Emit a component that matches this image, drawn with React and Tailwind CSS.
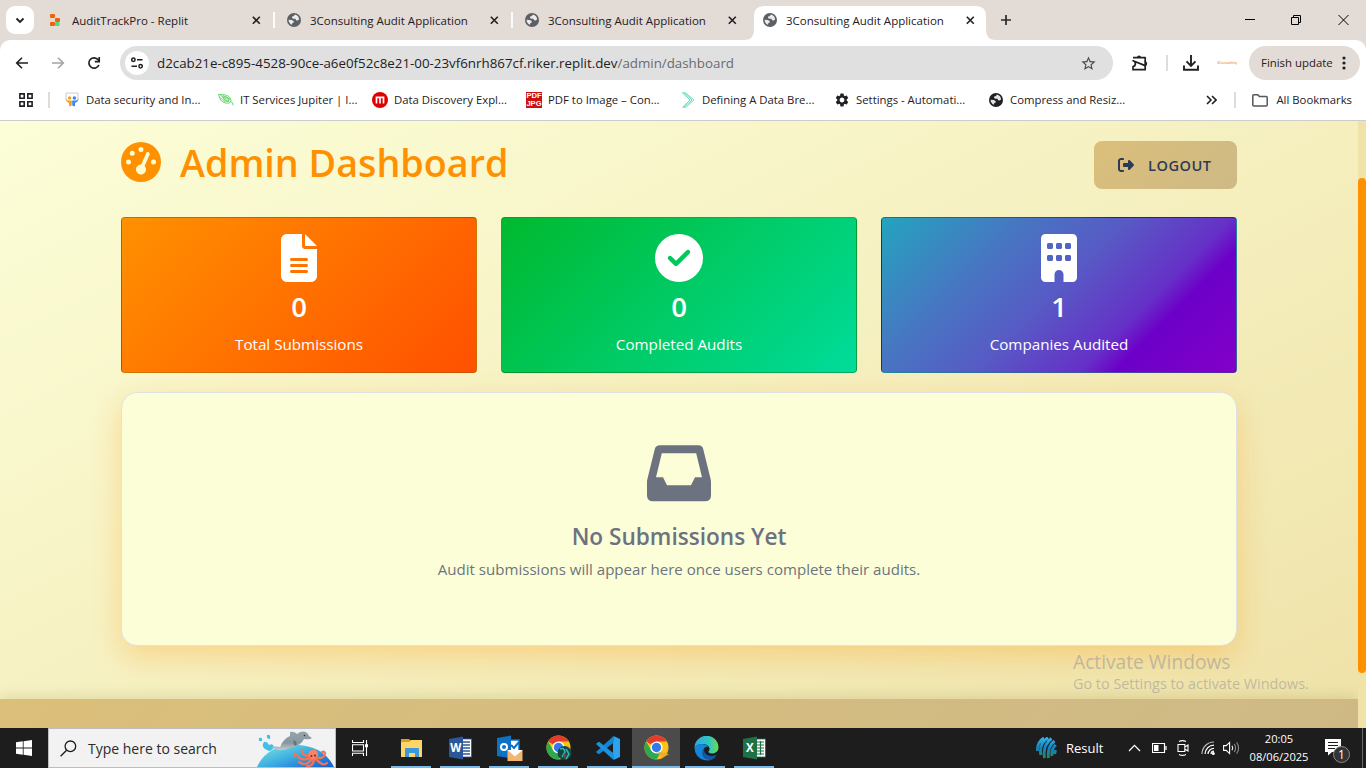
import React from "react";
import { FaGaugeHigh, FaFileLines, FaCircleCheck, FaBuilding, FaRightFromBracket } from "react-icons/fa6";
import { MdSettings, MdStarOutline } from "react-icons/md";

const Globe = ({ size = 14, className = "" }) => (
  <svg width={size} height={size} viewBox="0 0 14 14" className={className}>
    <circle cx="7" cy="7" r="7" fill="currentColor" />
    <path d="M7.8 1.5 L7 3 L5.2 3.4 L5 5 L6.5 5.7 L8.6 5.8 L9 7.2 L10.3 7.5 L12 6.8 A5.3 5.3 0 0 0 7.8 1.5Z" fill="#fff" opacity=".88" />
    <path d="M1.6 6.8 L4.8 7 L6.6 8 L6.8 9.6 L5.3 10 L5 11.8 A5.4 5.4 0 0 1 1.6 6.8Z" fill="#fff" opacity=".88" />
  </svg>
);

const Close = () => (
  <svg width="9" height="9" viewBox="0 0 9 9" className="block">
    <path d="M.8 .8L7.8 7.8M7.8 .8L.8 7.8" stroke="#1f2023" strokeWidth="1.6" />
  </svg>
);

const Replit = () => (
  <svg width="12" height="14" viewBox="0 0 12 14">
    <rect x="1" y="1" width="5" height="4" rx="1" fill="#f26207" />
    <rect x="6" y="5" width="5" height="4" rx="1" fill="#f26207" />
    <rect x="1" y="9" width="5" height="4" rx="1" fill="#f26207" />
    <rect x="6" y="9" width="4.5" height="4" rx="1" fill="#4ade80" />
  </svg>
);

function Tab({ title, icon, active, divider }) {
  return (
    <div className="relative flex h-[34px] w-[238px] shrink-0 items-start pl-[19px]">
      {active && (
        <svg width="252" height="34" viewBox="0 0 252 34" className="absolute left-0 top-0">
          <path d="M0 34Q10 34 10 24V10Q10 0 20 0H232Q242 0 242 10V24Q242 34 252 34Z" fill="#fff" />
        </svg>
      )}
      <div className="relative flex h-7 flex-1 items-center">
        <span className="flex w-[23px] shrink-0 items-center text-[#5c5f64]">{icon}</span>
        <span className="mt-px w-[180px] whitespace-nowrap text-[11.5px] text-[#1f2023]">{title}</span>
        <Close />
      </div>
      {divider && <div className="absolute right-[-7px] top-[6px] h-4 w-[2px] bg-white/90" />}
    </div>
  );
}

function TabStrip() {
  return (
    <div className="flex h-10 items-start bg-[#e3dbd6] pt-[6px]">
      <div className="ml-[6px] flex size-7 shrink-0 items-center justify-center rounded-[9px] bg-white">
        <svg width="10" height="7" viewBox="0 0 10 7"><path d="M1.5 1.5L5 5L8.5 1.5" fill="none" stroke="#1f2023" strokeWidth="1.8" /></svg>
      </div>
      <div className="ml-[-4px] flex">
        <Tab title="AuditTrackPro - Replit" icon={<Replit />} divider />
        <Tab title="3Consulting Audit Application" icon={<Globe />} divider />
        <Tab title="3Consulting Audit Application" icon={<Globe />} />
        <Tab title="3Consulting Audit Application" icon={<Globe />} active />
      </div>
      <svg width="12" height="12" viewBox="0 0 12 12" className="ml-[18px] mt-2"><path d="M6 1V11M1 6H11" stroke="#2b2b2d" strokeWidth="1.7" /></svg>
      <div className="ml-auto flex items-center gap-9 pr-[17px] pt-2">
        <svg width="10" height="12" viewBox="0 0 10 12"><path d="M0 5.5H10" stroke="#000" /></svg>
        <svg width="11" height="12" viewBox="0 0 11 12"><path d="M.5 3.5H7.5V10.5H.5ZM2.5 3.5V1.5H9.5V8.5H7.5" fill="none" stroke="#000" /></svg>
        <svg width="11" height="12" viewBox="0 0 11 12"><path d="M.5 1L10.5 11M10.5 1L.5 11" stroke="#000" /></svg>
      </div>
    </div>
  );
}

function Toolbar() {
  return (
    <div className="bg-[#e3dbd6]">
      <div className="flex h-[46px] items-center rounded-t-[10px] bg-white">
        <svg width="14" height="14" viewBox="0 0 14 14" className="ml-[15px]"><path d="M13 7H2M7 1.7L1.7 7L7 12.3" fill="none" stroke="#1f2023" strokeWidth="1.6" /></svg>
        <svg width="14" height="14" viewBox="0 0 14 14" className="ml-[22px]"><path d="M1 7H12M7 1.7L12.3 7L7 12.3" fill="none" stroke="#a5a3a2" strokeWidth="1.6" /></svg>
        <svg width="14" height="14" viewBox="0 0 14 14" className="ml-[22px]"><path d="M11.9 9A5.2 5.2 0 1 1 11.2 3.8L12 5" fill="none" stroke="#1f2023" strokeWidth="1.7" /><path d="M12.2 1V5.6H7.8" fill="none" stroke="#1f2023" strokeWidth="1.7" /></svg>
        <div className="ml-[19px] flex h-[34px] w-[993px] shrink-0 items-center rounded-full bg-[#e0e0e0] pl-[5px] pr-[16px]">
          <div className="flex size-6 shrink-0 items-center justify-center rounded-full bg-white">
            <svg width="12" height="12" viewBox="0 0 12 12" fill="none" stroke="#1f2023" strokeWidth="1.5"><circle cx="2.4" cy="2.8" r="1.7" /><path d="M6 2.8H11.5M.5 9.2H6" /><circle cx="9.6" cy="9.2" r="1.7" /></svg>
          </div>
          <span className="ml-2 whitespace-nowrap pt-px text-[13.33px] text-[#1f2023]">d2cab21e-c895-4528-90ce-a6e0f52c8e21-00-23vf6nrh867cf.riker.replit.dev<span className="text-[#6a6b6e]">/admin/dashboard</span></span>
          <MdStarOutline className="ml-auto size-[17px] text-[#4b4b4d]" />
        </div>
        <svg width="18" height="17" viewBox="0 0 18 17" className="ml-[18px]"><path d="M2 2.7H14.2V6.8M14.2 10.6V14.7H2V11.6Q4.4 11 4.4 8.7Q4.4 6.4 2 5.8Z" fill="none" stroke="#1f2023" strokeWidth="1.7" strokeLinejoin="round" /><path d="M6 2.5a2 2 0 0 1 4 0ZM14 6.5a2.2 2.2 0 0 1 0 4.4Z" fill="#1f2023" /><path d="M14.2 6V11.5" stroke="#1f2023" strokeWidth="1.7" /></svg>
        <div className="ml-[17px] h-4 w-[2px] bg-[#e3dbd6]" />
        <svg width="18" height="18" viewBox="0 0 18 18" className="ml-[14px]"><path d="M9 1V11.5M4.5 7.4L9 11.9L13.5 7.4M2 11.5V15.8H16V11.5" fill="none" stroke="#1f2023" strokeWidth="1.9" /></svg>
        <span className="ml-[17px] h-[6px] w-[20px] shrink-0 overflow-hidden whitespace-nowrap text-[3.6px] font-bold leading-[5px] text-[#f5a868]">3Consulting</span>
        <div className="ml-3 flex h-[34px] w-[111px] shrink-0 items-center rounded-full bg-[#e3dbd6] pl-3">
          <span className="w-[81px] whitespace-nowrap text-[11.4px] text-[#1f2023]">Finish update</span>
          <svg width="4" height="14" viewBox="0 0 4 14" fill="#1f2023"><circle cx="2" cy="2" r="1.6" /><circle cx="2" cy="7" r="1.6" /><circle cx="2" cy="12" r="1.6" /></svg>
        </div>
      </div>
    </div>
  );
}

const SlideIcon = () => (
  <svg width="14" height="15" viewBox="0 0 14 15"><path d="M1 1H13V8" fill="none" stroke="#c9cacc" /><path d="M1 1V8" stroke="#c9cacc" /><circle cx="4.6" cy="6" r="1.8" fill="#f0a323" /><circle cx="9.4" cy="6" r="1.8" fill="#3f86ee" /><path d="M.5 6.5C2 9 4 8.5 6.8 8.5V13Q6 15 4 14V11Q1 10 .5 6.5Z" fill="#f0a323" /><path d="M13.5 6.5C12 9 10 8.5 7.2 8.5V13Q8 15 10 14V11Q13 10 13.5 6.5Z" fill="#3f86ee" /></svg>
);
const LeafIcon = () => (
  <svg width="17" height="14" viewBox="0 0 17 14" fill="none" stroke="#57cf5b" strokeWidth=".9"><path d="M.5 1L8 1.6Q15 4 13.5 9L11 10.5Q4 10.5 2 5.5ZM2 1.5L12 8.5M1.6 4L8 9.4M5 2L13 6.4M13.5 8.5Q16 9 16 12.8" /><path d="M5 4Q9 2.5 12 5.5L11 9Q7 9 5 4Z" fill="#a4e8a5" /></svg>
);
const MIcon = () => (
  <svg width="16" height="16" viewBox="0 0 16 16"><circle cx="8" cy="8" r="8" fill="#e00000" /><path d="M4.5 11.5V5.3H11.5V11.5M8 5.3V11.5" fill="none" stroke="#fff" strokeWidth="1.7" /></svg>
);
const PdfIcon = () => (
  <span className="flex h-4 w-4 flex-col items-center justify-center bg-[#cf1010] font-['Liberation_Sans'] text-[7.6px] font-bold leading-[7.5px] text-white"><span>PDF</span><span>JPG</span></span>
);
const ChevIcon = () => (
  <svg width="13" height="16" viewBox="0 0 13 16" fill="none" stroke="#5fe0b8"><path d="M.5.8H3.5L11.8 8L4 15.2H.7L8 8ZM2 .8L10 8L2 15.2" /></svg>
);

const bookmarks = [
  ["Data security and In...", <SlideIcon />],
  ["IT Services Jupiter | I...", <LeafIcon />],
  ["Data Discovery Expl...", <MIcon />],
  ["PDF to Image – Con...", <PdfIcon />],
  ["Defining A Data Bre...", <ChevIcon />],
  ["Settings - Automati...", <MdSettings className="size-4 text-[#1f2023]" />],
  ["Compress and Resiz...", <Globe className="text-[#1f2023]" />],
];

function Bookmarks() {
  return (
    <div className="flex h-[35px] items-center border-b border-[#cbccce] bg-white pb-[6px] text-[11.35px] text-[#1f2023]">
      <svg width="14" height="14" viewBox="0 0 14 14" className="ml-[19px] shrink-0" fill="none" stroke="#1f2023" strokeWidth="1.6"><path d="M.9.9H5.2V5.2H.9ZM8.8.9H13.1V5.2H8.8ZM.9 8.8H5.2V13.1H.9ZM8.8 8.8H13.1V13.1H8.8Z" /></svg>
      <div className="ml-[15px] h-4 w-[2px] shrink-0 bg-[#e3dbd6]" />
      <div className="ml-[14px] flex">
        {bookmarks.map(([t, icon]) => (
          <div key={t} className="flex w-[154px] shrink-0 items-center">
            <span className="flex w-[22px] shrink-0 items-center">
              <span className="flex w-4 justify-center">{icon}</span>
            </span>
            <span className="whitespace-nowrap">{t}</span>
          </div>
        ))}
      </div>
      <svg width="11" height="10" viewBox="0 0 11 10" className="ml-auto shrink-0" fill="none" stroke="#1f2023" strokeWidth="1.6"><path d="M1 1L5 5L1 9M6 1L10 5L6 9" /></svg>
      <div className="ml-[17px] h-4 w-[2px] shrink-0 bg-[#e3dbd6]" />
      <svg width="16" height="13" viewBox="0 0 16 13" className="ml-4 shrink-0" fill="none" stroke="#55575b" strokeWidth="1.5"><path d="M.8 1.8Q.8.8 1.8.8H5.8L7.4 2.5H14.2Q15.2 2.5 15.2 3.5V11Q15.2 12 14.2 12H1.8Q.8 12 .8 11Z" /></svg>
      <span className="ml-2 mr-[14px] whitespace-nowrap">All Bookmarks</span>
    </div>
  );
}

const Inbox = () => (
  <svg width="64" height="64" viewBox="0 0 64 64" fill="#6c727f" className="shrink-0">
    <path fillRule="evenodd" d="M13 4.3H51.5Q55.3 4.3 56.2 8L63.6 38Q64 39.5 64 41V54.5Q64 60.3 58 60.3H6Q0 60.3 0 54.5V41Q0 39.5 .4 38L7.8 8Q8.8 4.3 13 4.3ZM14.8 12.3L9 36.3H16L20 44.3H44L48 36.3H55L49.2 12.3Z" />
  </svg>
);

function Stat({ icon, value, label, bg }) {
  return (
    <div className={"flex h-[156px] flex-1 flex-col items-center rounded-[4px] border border-black/[0.175] pt-4 text-white " + bg}>
      {icon}
      <div className="mt-[8px] text-[27.5px] font-semibold leading-[34px]">{value}</div>
      <div className="mt-[8px] text-[15.2px] leading-6">{label}</div>
    </div>
  );
}

function Page() {
  return (
    <div className="flex h-[607px] bg-[#f0e3a8]">
      <div className="flex w-[1358px] flex-col overflow-hidden bg-[linear-gradient(153deg,#fcfed8_0%,#efe2a8_100%)]">
        <div className="relative mx-auto flex h-[578px] w-[1116px] flex-col pt-5">
          <div className="flex items-start justify-between">
            <h1 className="flex h-12 items-center text-[37.7px] text-[#ff9100]">
              <FaGaugeHigh className="mt-[-6px] size-10" />
              <span className="ml-[19px] mt-[-4px] whitespace-nowrap font-semibold">Admin Dashboard</span>
            </h1>
            <button className="flex h-12 w-[143px] items-center rounded-lg bg-[linear-gradient(135deg,#dbbf7a,#ceb986)] pl-[24px] text-[#2d3a55]">
              <FaRightFromBracket className="size-4" />
              <span className="ml-[14px] pt-px text-[14.6px] font-semibold tracking-[0.5px]">LOGOUT</span>
            </button>
          </div>
          <div className="mt-7 flex gap-6">
            <Stat icon={<FaFileLines className="size-12" />} value="0" label="Total Submissions" bg="bg-[linear-gradient(135deg,#ff9100,#ff5000)]" />
            <Stat icon={<FaCircleCheck className="size-12" />} value="0" label="Completed Audits" bg="bg-[linear-gradient(135deg,#00b92e,#00dc9b)]" />
            <Stat icon={<FaBuilding className="size-12" />} value="1" label="Companies Audited" bg="bg-[linear-gradient(135deg,#23a4be_0%,#4776c2_28%,#575bc5_48%,#6630c7_69%,#6c00c8_76%,#8400c8_100%)]" />
          </div>
          <div className="mt-[19px] flex h-[254px] flex-col items-center rounded-[16px] border border-[#dee2e6] bg-[#fcfed8] pt-12 shadow-[0_10px_30px_rgba(255,145,0,0.3)]">
            <Inbox />
            <div className="mt-[17px] text-[22.6px] font-semibold leading-[30px] text-[#6c727f]">No Submissions Yet</div>
            <div className="mt-[5px] text-[15.07px] leading-6 text-[#6c757d]">Audit submissions will appear here once users complete their audits.</div>
          </div>
          <div className="absolute left-[952px] top-[529px] whitespace-nowrap text-[#8c8f96]/50">
            <div className="text-[19.2px] leading-[24px]">Activate Windows</div>
            <div className="text-[14.4px] leading-[20px]">Go to Settings to activate Windows.</div>
          </div>
        </div>
        <div className="h-[29px] shrink-0 bg-[linear-gradient(135deg,#dbbf7a,#ceb986)] shadow-[0_-3px_14px_rgba(120,110,40,0.18)]" />
      </div>
      <div className="w-2 pt-[57px]"><div className="h-[495px] rounded-full bg-[#ff9100]" /></div>
    </div>
  );
}

const ChromeIcon = ({ badge }) => (
  <svg width="26" height="26" viewBox="0 0 26 26">
    <circle cx="12.5" cy="12.5" r="12" fill="#fbc116" />
    <path d="M12.5 12.5L2.1 6.5A12 12 0 0 1 22.9 6.5H12.5Z" fill="#e33b2e" />
    <path d="M2.1 6.5A12 12 0 0 0 12.5 24.5L17.7 15.5L12.5 12.5L7.3 15.5Z" fill="#2da94f" />
    <circle cx="12.5" cy="12.5" r="6.1" fill="#fff" />
    <circle cx="12.5" cy="12.5" r="4.7" fill="#3379ee" />
    {badge && <g><circle cx="18.5" cy="18" r="7" fill="#14474b" /><path d="M14 14Q18 12 19 17L16 22M20 14L23 19L20 24" stroke="#35b5a8" strokeWidth="1.5" fill="none" /><path d="M17 20L20 17L19 24Z" fill="#7d4b3c" /></g>}
    {!badge && <path d="M12.5 17.5H22L25 19.5L19 22.5L15.5 20Z" fill="#e9a63b" opacity=".8" />}
  </svg>
);
const Explorer = () => (
  <svg width="22" height="20" viewBox="0 0 22 20"><path d="M0 1H8L10 3V5H0Z" fill="#e0a010" /><path d="M0 4H8L10 2H21V19H0Z" fill="#fcd667" /><path d="M4 19V11Q4 10 5 10H17Q18 10 18 11V19H14V15H8V19Z" fill="#3d97dd" /></svg>
);
const Office = ({ color, letter, kind }) => (
  <svg width="24" height="24" viewBox="0 0 24 24">
    <rect x="11" y="3" width="11.5" height="18" fill="#fff" stroke={color} strokeWidth=".8" />
    {kind === "x" ? <path d="M14 6H21M14 9H21M14 12H21M14 15H21M14 18H21M17.5 5V19" stroke={color} strokeWidth="1.2" /> : <path d="M14 6H21M14 9H21M14 12H21M14 15H21M14 18H21" stroke={color} strokeWidth="1.3" />}
    <path d="M0 3L14 .5V23.5L0 21Z" fill={color} />
    <text x="6.8" y="16" textAnchor="middle" fontSize="11.5" fontWeight="700" fontFamily="Open Sans, sans-serif" fill="#fff">{letter}</text>
  </svg>
);
const Outlook = () => (
  <svg width="26" height="26" viewBox="0 0 26 26">
    <rect x="11" y="5" width="11" height="13" fill="#fff" stroke="#0b72c8" strokeWidth="1.5" />
    <path d="M14 10L17 13L22 7" stroke="#0b72c8" strokeWidth="2" fill="none" />
    <path d="M0 3L14 .5V23.5L0 21Z" fill="#0b72c8" />
    <circle cx="7" cy="12" r="3" fill="none" stroke="#fff" strokeWidth="2" />
    <rect x="10.5" y="15" width="15" height="11" fill="#f3b672" /><path d="M10.5 15L18 21.5L25.5 15Z" fill="#fff" />
  </svg>
);
const VSCode = () => (
  <svg width="24" height="24" viewBox="0 0 24 24"><path d="M17.5 0L24 3V21L17.5 24L17 18V6Z" fill="#2ba4f0" /><path d="M17.5 0V6.7L3.2 18.2L1.6 17.6L0 16L17.5 0Z" fill="#1685cf" /><path d="M17.5 24V17.3L3.2 5.8L1.6 6.4L0 8L17.5 24Z" fill="#1c91dd" /></svg>
);
const Edge = () => (
  <svg width="25" height="25" viewBox="0 0 25 25">
    <defs>
      <linearGradient id="eg" x1="0" y1=".3" x2="1" y2=".3"><stop stopColor="#2aa9e0" /><stop offset=".6" stopColor="#2fc6c4" /><stop offset="1" stopColor="#6bdc4e" /></linearGradient>
    </defs>
    <path d="M.5 12A12 12 0 0 1 24.5 11.5C24.5 15.5 21 17.5 17.5 17.5Q14 17.3 14.5 15.5Q16 14 15.5 12Q14 8 8.5 8Q3 8 .5 12Z" fill="url(#eg)" />
    <path d="M.5 12Q3 7.5 8.5 8Q13 8.5 14.5 11Q10.5 9.8 9.4 13.5Q8.5 20 16 22.5L17 24Q12 25.3 7 23Q1 19.5 .5 12Z" fill="#1585d8" />
    <path d="M10 12.5Q9.5 18.5 15.5 19.8Q19.5 20.4 22.6 18.4Q21 23 16 24.2Q7.5 23 8 16.5Q8.3 13.5 10 12.5Z" fill="#1258a8" />
  </svg>
);

const SearchArt = () => (
  <svg width="79" height="38" viewBox="0 0 79 38" className="ml-auto shrink-0">
    <defs>
      <linearGradient id="sea" x1="0" y1="0" x2="1" y2=".8"><stop stopColor="#86e6da" /><stop offset=".5" stopColor="#3fb2e2" /><stop offset="1" stopColor="#1668d4" /></linearGradient>
      <linearGradient id="dol" x1="0" y1="0" x2="0" y2="1"><stop stopColor="#93a6ac" /><stop offset=".6" stopColor="#87979e" /><stop offset="1" stopColor="#c5ced1" /></linearGradient>
    </defs>
    <path d="M1 38Q11 16 39 16Q67 16 78 38Z" fill="url(#sea)" />
    <path d="M9 20Q5 17 8 13Q11 12 13 16Q17 14 18 18Q17 21 13 22ZM3 9Q7 8 6 12Q2 13 3 9ZM11 6Q15 5 14 10Q10 10 11 6Z" fill="#42bfe9" />
    <path d="M15 18Q20 17 24 18Q27 10 34 7L34 3Q38 2 41 5L44 3Q51 1 53 7L56 9Q54 11 48 10Q45 17 34 19Q27 22 22 21Q19 20 15 18Z" fill="url(#dol)" />
    <path d="M38 11Q42 13 40 17Q36 15 38 11Z" fill="#60757f" />
    <circle cx="48.5" cy="6.5" r=".8" fill="#26343a" />
    <ellipse cx="57" cy="26" rx="5" ry="5.5" fill="#fb8264" transform="rotate(20 57 26)" />
    <path d="M54 29Q45 33 41 26Q38 23 38 27M55 31Q50 38 43 33M58 31Q57 37 51 37M60 30Q67 38 71 34M60 28Q67 31 69 25Q69 22 66 23M53 27Q47 27 46 22" fill="none" stroke="#f47455" strokeWidth="2.3" strokeLinecap="round" />
    <circle cx="55.5" cy="27" r=".9" fill="#432" /><circle cx="59" cy="26.5" r=".9" fill="#432" />
  </svg>
);

const apps = [
  [<Explorer />], [<Office color="#2b579a" letter="W" />], [<Outlook />], [<ChromeIcon badge />], [<VSCode />], [<ChromeIcon />, true], [<Edge />], [<Office color="#1e7145" letter="X" kind="x" />],
];

function Taskbar() {
  return (
    <div className="flex h-10 items-stretch bg-[#1d1d1d] text-white">
      <div className="flex w-12 items-center justify-center">
        <svg width="16" height="16" viewBox="0 0 16 16" fill="#fff"><path d="M0 2.3L6.8 1.3V7.6H0ZM7.6 1.2L16 0V7.6H7.6ZM0 8.4H6.8V14.7L0 13.7ZM7.6 8.4H16V16L7.6 14.8Z" /></svg>
      </div>
      <div className="flex w-[288px] items-center border border-[#bdbdbd] bg-[#f2f2f2] pl-[11px]">
        <svg width="17" height="17" viewBox="0 0 17 17" fill="none" stroke="#1d1d1d" strokeWidth="1.3"><circle cx="10.4" cy="6.3" r="5.3" /><path d="M6.6 10.2L.6 16.3" /></svg>
        <span className="ml-[11px] whitespace-nowrap pt-px text-[14px] text-[#2b2b2b]">Type here to search</span>
        <SearchArt />
      </div>
      <div className="flex w-12 items-center justify-center">
        <svg width="17" height="16" viewBox="0 0 17 16" fill="none" stroke="#fff"><path d="M.5 0V2.5H11.5V0M.5 4.8H11.5V11H.5ZM.5 16V13.3H11.5V16M14.5 0V16" strokeWidth="1.1" /><path d="M13 4.2H16V7.2H13Z" fill="#fff" stroke="none" /></svg>
      </div>
      <div className="ml-[3px] flex gap-px">
        {apps.map(([icon, on], i) => (
          <div key={i} className={"flex w-12 flex-col items-center " + (on ? "bg-[#4b4b4b]" : "")}>
            <div className="flex h-[38px] items-center pl-[2px] pt-[2px]">{icon}</div>
            <div className={"h-[2px] bg-[#76b9ed] " + (on ? "w-12" : "w-10")} />
          </div>
        ))}
      </div>
      <div className="ml-auto flex items-center">
        <svg width="21" height="22" viewBox="0 0 21 22"><defs><linearGradient id="icc" x1="0" y1="0" x2="0" y2="1"><stop stopColor="#2cb4ea" /><stop offset=".5" stopColor="#1682bd" /><stop offset="1" stopColor="#25896b" /></linearGradient></defs><g fill="none" stroke="url(#icc)" strokeWidth="2.9"><path d="M8 1Q1 5 1.5 14M12 .8Q3 6 4.8 18M15.5 1.5Q6.5 8 8.5 21M18.5 4Q11 10 12.5 21M19.8 8Q15 12 16 19M19.5 13L18.6 17" /></g></svg>
        <span className="ml-[9px] w-[62px] whitespace-nowrap pt-px text-[13px]">Result</span>
        <svg width="13" height="8" viewBox="0 0 13 8"><path d="M1 7L6.5 1.4L12 7" fill="none" stroke="#fff" strokeWidth="1.3" /></svg>
        <svg width="15" height="10" viewBox="0 0 15 10" className="ml-[11px]"><path d="M.5.5H12.5V9.5H.5ZM14 3V7" fill="none" stroke="#fff" strokeWidth="1.2" /><path d="M2 2H6.5V8H2Z" fill="#fff" /></svg>
        <svg width="12" height="16" viewBox="0 0 12 16" className="ml-[10px]" fill="none" stroke="#fff" strokeWidth="1.1"><path d="M2 1.5Q5.5-.3 9 1.5M2 14.5Q5.5 16.3 9 14.5M1 4.5H7.8V11.5H1ZM7.8 7L11 5V11L7.8 9" /></svg>
        <svg width="14" height="14" viewBox="0 0 14 14" className="ml-[12px]" fill="none" stroke="#fff" strokeWidth="1.2"><path d="M1 13A12 12 0 0 1 13 1" opacity=".7" /><path d="M4 13A9 9 0 0 1 13 4.2M7 13A6 6 0 0 1 13 7.3M10 13A3 3 0 0 1 13 10.2" /><circle cx="12.3" cy="12.5" r=".9" fill="#fff" /></svg>
        <svg width="17" height="14" viewBox="0 0 17 14" className="ml-2" fill="none" stroke="#fff" strokeWidth="1.1"><path d="M.6 4.6H3.2L6.6 1.4V12.6L3.2 9.4H.6Z" /><path d="M9 4.8Q10.4 7 9 9.2" /><path d="M11.3 3Q13.8 7 11.3 11M13.6 1.2Q17.6 7 13.6 12.8" opacity=".5" /></svg>
        <div className="ml-[9px] w-[60px] whitespace-nowrap text-center text-[11.1px] leading-[18px]"><div>20:05</div><div>08/06/2025</div></div>
        <div className="relative ml-[16px] h-6 w-[26px]">
          <svg width="17" height="17" viewBox="0 0 17 17" className="absolute left-0 top-[3px]"><path d="M0 0H16V13H7L3 16.5V13H0Z" fill="#fff" /><path d="M3 3.5H13M3 6.5H13M3 9.5H10" stroke="#1d1d1d" strokeWidth="1.1" /></svg>
          <span className="absolute left-[8px] top-[10px] flex size-[17px] items-center justify-center rounded-full border border-[#8b8b8b] bg-[#343434] text-[12px] leading-none">1</span>
        </div>
        <div className="ml-[11px] mr-[3px] h-10 w-px bg-[#6a6a6a]" />
      </div>
    </div>
  );
}

export default function App() {
  return (
    <div className="flex h-[768px] w-[1366px] flex-col overflow-hidden font-['Open_Sans','Noto_Sans',sans-serif]">
      <TabStrip />
      <Toolbar />
      <Bookmarks />
      <Page />
      <Taskbar />
    </div>
  );
}
